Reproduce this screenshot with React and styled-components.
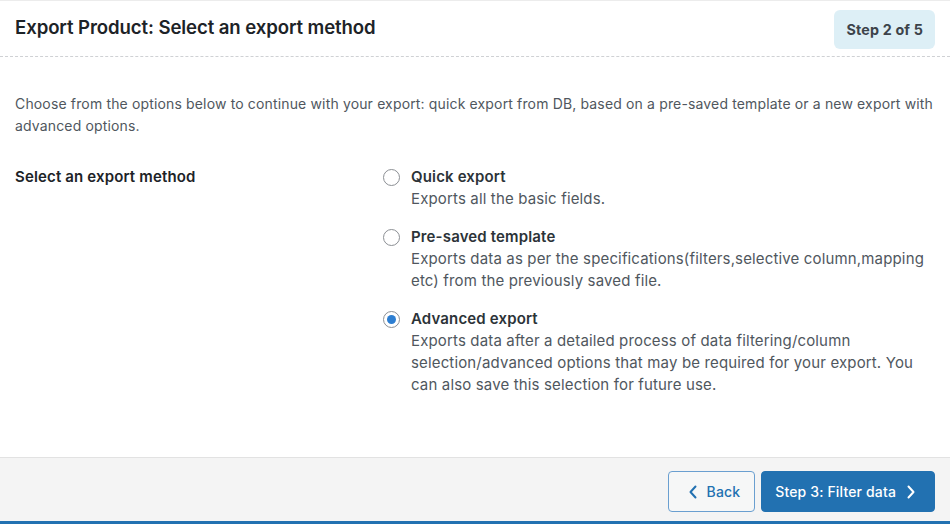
import React from "react";
import styled, { createGlobalStyle } from "styled-components";

const Global = createGlobalStyle`
  html, body { margin: 0; padding: 0; background: #fff; }
  body { font-family: Inter, "Noto Sans", sans-serif; -webkit-font-smoothing: antialiased; }
  * { box-sizing: border-box; }
`;

const Card = styled.div`
  width: 950px;
  height: 524px;
  display: flex;
  flex-direction: column;
  background: #fff;
  border-top: 1px solid #ececec;
  border-bottom: 3px solid #2271b1;
`;

const Header = styled.div`
  display: flex;
  align-items: center;
  justify-content: space-between;
  padding: 9px 15px 7px 15px;
  border-bottom: 1px dashed #cfd1d4;
`;

const Title = styled.h2`
  margin: 0 0 5px 0;
  font-size: 18.6px;
  font-weight: 600;
  color: #1d2327;
  letter-spacing: -0.1px;
`;

const Badge = styled.div`
  height: 39px;
  padding: 0 12px 0 13px;
  display: flex;
  align-items: center;
  background: #ddeff6;
  border-radius: 6px;
  font-size: 14.3px;
  font-weight: 700;
  letter-spacing: 0.15px;
  color: #3c434a;
`;

const Body = styled.div`
  flex: 1;
  padding: 36px 15px 0 15px;
  font-size: 14px;
  line-height: 22px;
  letter-spacing: 0.15px;
`;

const Intro = styled.p`
  margin: 0 0 29px 0;
  color: #50575e;
`;

const FieldRow = styled.div`
  display: grid;
  grid-template-columns: 368px 1fr;
  font-size: 15px;
`;

const FieldLabel = styled.div`
  font-weight: 600;
  color: #1d2327;
`;

const Options = styled.div`
  display: flex;
  flex-direction: column;
  gap: 16px;
`;

const Option = styled.label`
  display: grid;
  grid-template-columns: 17px 1fr;
  column-gap: 11px;
  cursor: pointer;
`;

const Radio = styled.span`
  width: 17px;
  height: 17px;
  margin-top: 3px;
  border-radius: 50%;
  border: 1px solid #8c8f94;
  background: #fff;
  display: flex;
  align-items: center;
  justify-content: center;
  &::after {
    content: "";
    width: 9px;
    height: 9px;
    border-radius: 50%;
    background: ${(p) => (p.$checked ? "#2d7ed1" : "transparent")};
  }
`;

const OptionText = styled.div`
  display: flex;
  flex-direction: column;
`;

const OptionTitle = styled.span`
  font-weight: 600;
  color: #2c3338;
`;

const OptionDesc = styled.span`
  color: #50575e;
  max-width: 520px;
`;

const Footer = styled.div`
  display: flex;
  justify-content: flex-end;
  gap: 6px;
  padding: 13px 15px 0 15px;
  height: 64px;
  background: #f4f4f4;
  border-top: 1px solid #e2e2e2;
`;

const Button = styled.button`
  height: 41px;
  display: inline-flex;
  align-items: center;
  gap: ${(p) => (p.$primary ? "10px" : "9px")};
  padding: ${(p) => (p.$primary ? "0 18px 0 13px" : "0 14px 0 19px")};
  border-radius: 4px;
  font-family: inherit;
  font-size: 14px;
  font-weight: 500;
  letter-spacing: 0.15px;
  border: 1px solid ${(p) => (p.$primary ? "#2271b1" : "#6a9fd0")};
  background: ${(p) => (p.$primary ? "#2271b1" : "#f6f7f7")};
  color: ${(p) => (p.$primary ? "#fff" : "#2271b1")};
  cursor: pointer;
`;

const Chevron = ({ dir }) => (
  <svg width="10" height="14" viewBox="0 0 10 14" fill="none">
    <path
      d={dir === "left" ? "M7.5 1.5L2.5 7l5 5.5" : "M2.5 1.5L7.5 7l-5 5.5"}
      stroke="currentColor"
      strokeWidth="2"
      strokeLinecap="round"
      strokeLinejoin="round"
    />
  </svg>
);

const options = [
  { title: "Quick export", desc: "Exports all the basic fields." },
  {
    title: "Pre-saved template",
    desc: "Exports data as per the specifications(filters,selective column,mapping etc) from the previously saved file.",
  },
  {
    title: "Advanced export",
    desc: "Exports data after a detailed process of data filtering/column selection/advanced options that may be required for your export. You can also save this selection for future use.",
    checked: true,
  },
];

export default function App() {
  return (
    <>
      <Global />
      <Card>
        <Header>
          <Title>Export Product: Select an export method</Title>
          <Badge>Step 2 of 5</Badge>
        </Header>
        <Body>
          <Intro>
            Choose from the options below to continue with your export: quick export from DB, based on a
            pre-saved template or a new export with advanced options.
          </Intro>
          <FieldRow>
            <FieldLabel>Select an export method</FieldLabel>
            <Options>
              {options.map((o) => (
                <Option key={o.title}>
                  <Radio $checked={o.checked} />
                  <OptionText>
                    <OptionTitle>{o.title}</OptionTitle>
                    <OptionDesc>{o.desc}</OptionDesc>
                  </OptionText>
                </Option>
              ))}
            </Options>
          </FieldRow>
        </Body>
        <Footer>
          <Button>
            <Chevron dir="left" />
            Back
          </Button>
          <Button $primary>
            Step 3: Filter data
            <Chevron dir="right" />
          </Button>
        </Footer>
      </Card>
    </>
  );
}
